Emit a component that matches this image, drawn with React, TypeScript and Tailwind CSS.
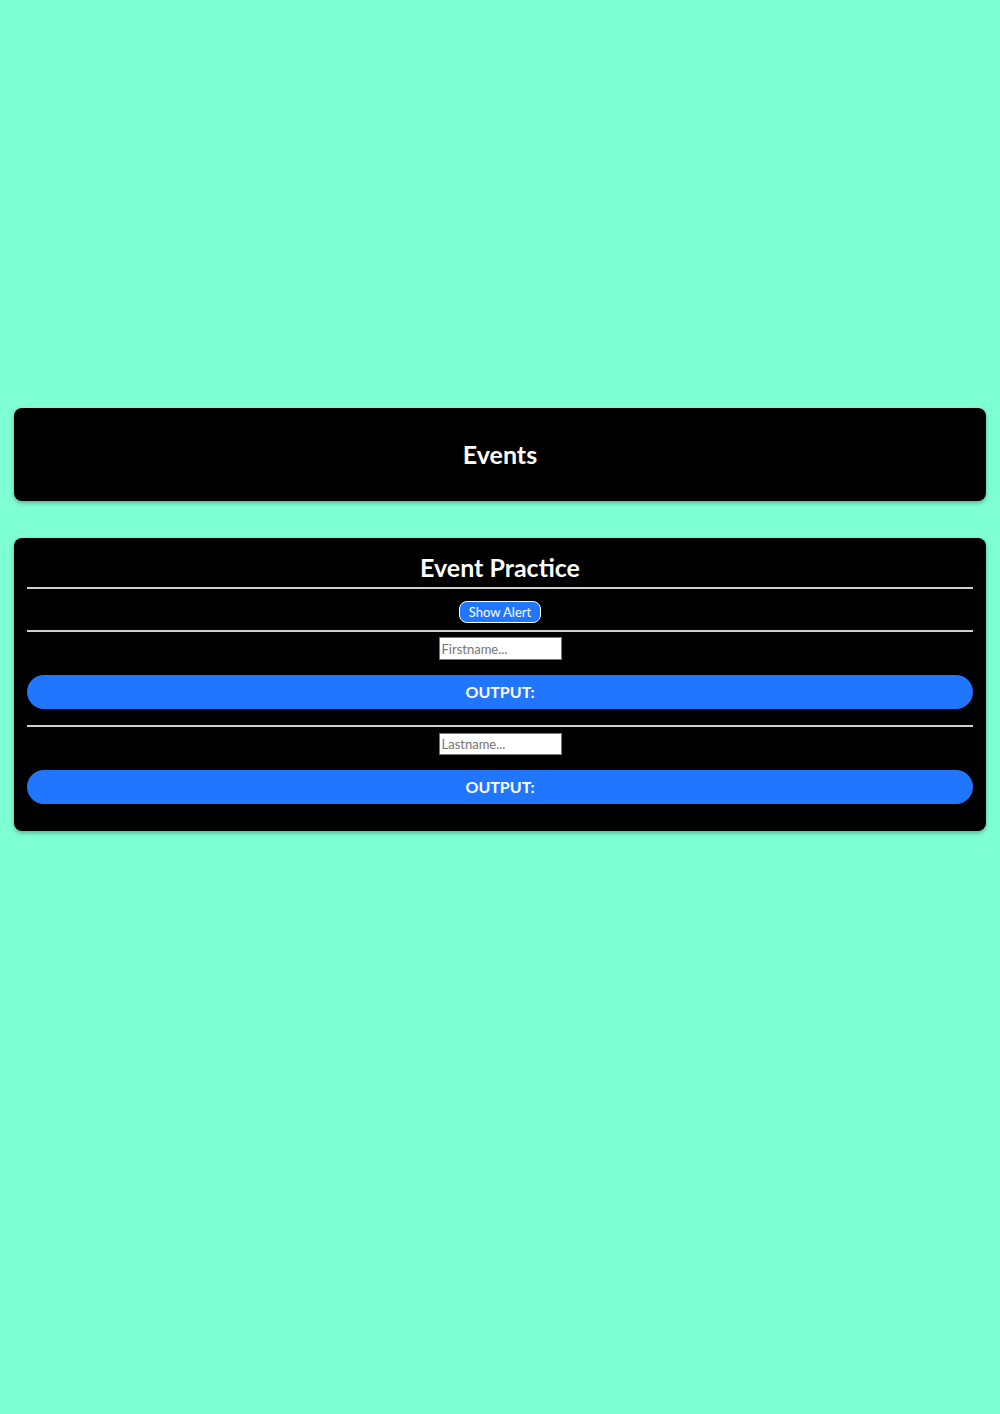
import React, { useState } from "react";

const App = () => {
    const [first, setFirst] = useState("");
    const [last, setLast] = useState("");

    return (
        <div className="min-h-[1414px] w-full bg-[#7fffd4] px-[14px] pt-[408px] font-['Lato',sans-serif]">
            <div className="flex h-[93px] items-center justify-center rounded-lg bg-black shadow-[0_2px_4px_rgba(0,0,0,0.3)]">
                <h1 className="text-[25px] font-bold leading-none text-white">Events</h1>
            </div>

            <div className="mt-[37px] flex flex-col rounded-lg bg-black px-[13px] pt-[15px] pb-[27px] shadow-[0_2px_4px_rgba(0,0,0,0.3)]">
                <h2 className="text-center text-[25px] font-bold leading-[28px] text-white">Event Practice</h2>
                <hr className="mt-[6px] border-t-2 border-[#cfcfcf]" />
                <div className="flex justify-center pt-[12px] pb-[7px]">
                    <button
                        onClick={() => alert("Hello!")}
                        className="h-[22px] w-[82px] rounded-lg border border-white bg-[#2176ff] text-[13px] leading-none text-white"
                    >
                        Show Alert
                    </button>
                </div>
                <hr className="border-t-2 border-[#cfcfcf]" />
                <div className="flex justify-center pt-[5px]">
                    <input
                        value={first}
                        onChange={(e) => setFirst(e.target.value)}
                        placeholder="Firstname..."
                        className="h-[23px] w-[123px] border border-[#767676] bg-white px-[2px] text-[13px] text-black placeholder:text-[#757575]"
                    />
                </div>
                <div className="mt-[15px] flex h-[34px] items-center justify-center rounded-full bg-[#2176ff]">
                    <span className="text-[16px] font-bold text-white">OUTPUT: {first}</span>
                </div>
                <hr className="mt-[16px] border-t-2 border-[#cfcfcf]" />
                <div className="flex justify-center pt-[6px]">
                    <input
                        value={last}
                        onChange={(e) => setLast(e.target.value)}
                        placeholder="Lastname..."
                        className="h-[22px] w-[123px] border border-[#767676] bg-white px-[2px] text-[13px] text-black placeholder:text-[#757575]"
                    />
                </div>
                <div className="mt-[15px] flex h-[34px] items-center justify-center rounded-full bg-[#2176ff]">
                    <span className="text-[16px] font-bold text-white">OUTPUT: {last}</span>
                </div>
            </div>
        </div>
    );
};

export default App;
